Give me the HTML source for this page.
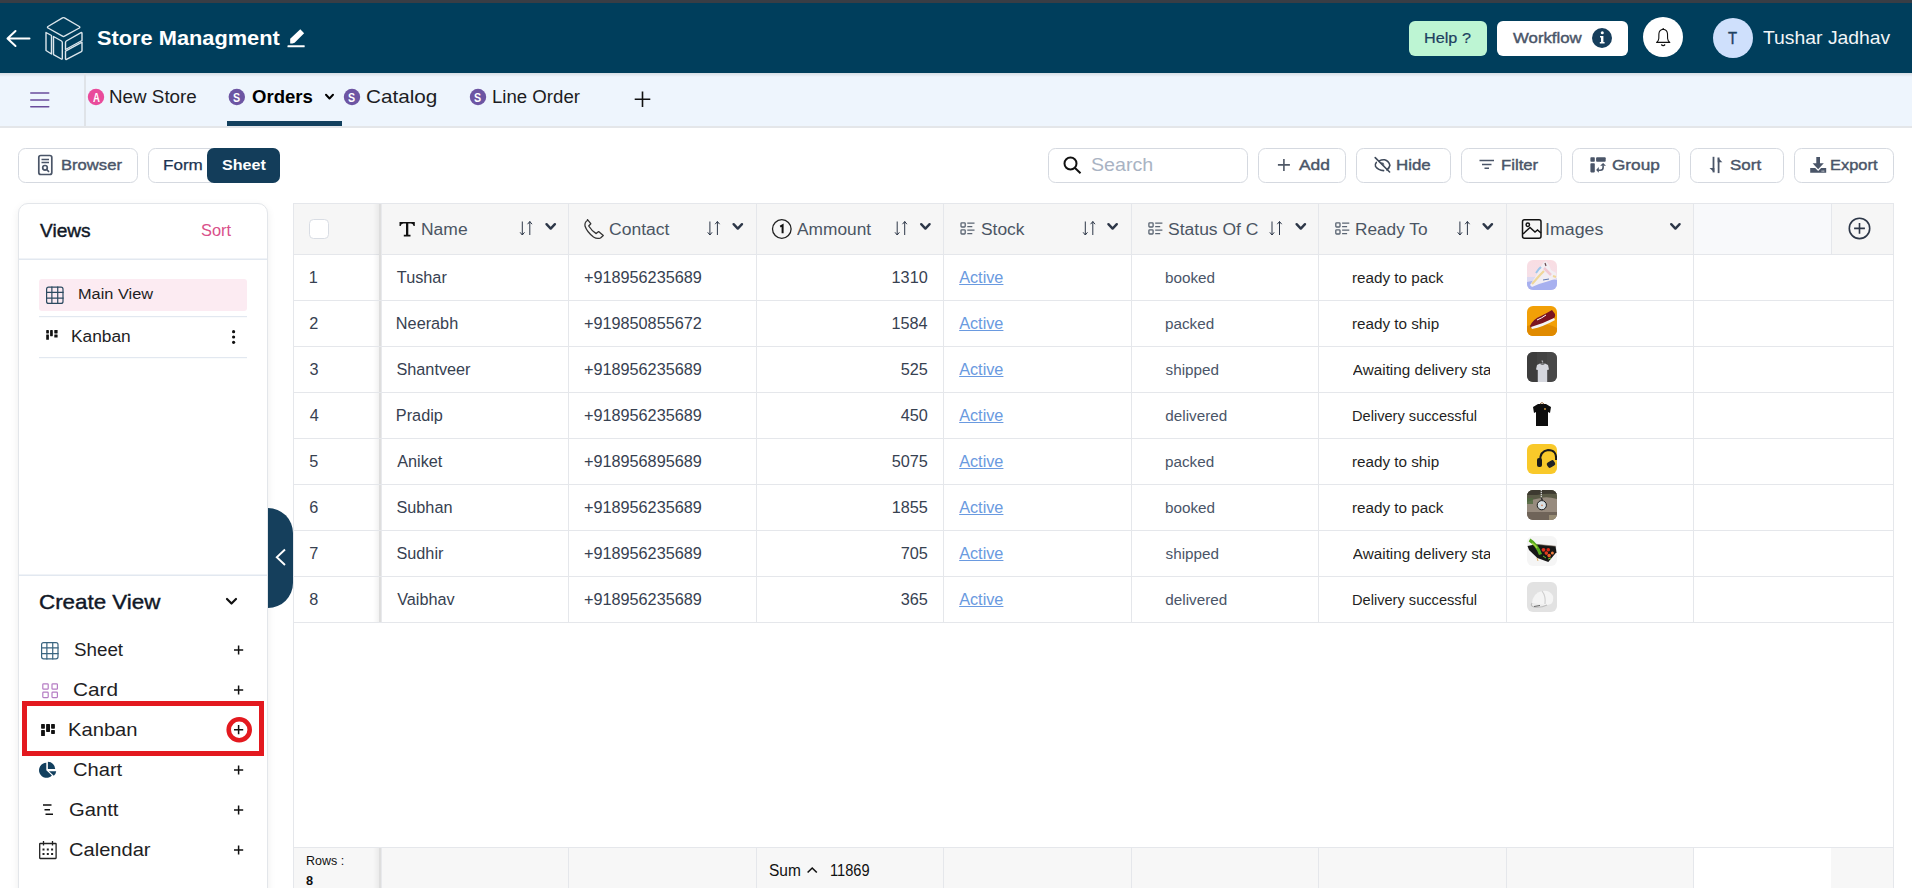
<!DOCTYPE html><html><head><meta charset="utf-8"><style>
html,body{margin:0;padding:0;width:1912px;height:888px;overflow:hidden;background:#fff;}
body{position:relative;font-family:"Liberation Sans",sans-serif;}
.t{position:absolute;white-space:nowrap;line-height:1;transform-origin:0 0;}
svg.ov{position:absolute;left:0;top:0;}
.d{position:absolute;}
</style></head><body>
<div class="d" style="left:18px;top:203px;width:248px;height:700px;border:1px solid #e3e6ea;border-radius:10px;box-shadow:0 3px 8px rgba(0,0,0,0.07);background:#fff;"></div>
<svg class="ov" width="1912" height="888" viewBox="0 0 1912 888">
<rect x="0" y="0" width="1912" height="3" fill="#383d45" />
<rect x="0" y="3" width="1912" height="70" fill="#003e5c" />
<path d="M29.5 38.5 H8 M15.5 31 L7.5 38.5 L15.5 46" fill="none" stroke="#fff" stroke-width="2" stroke-linecap="round" stroke-linejoin="round"/>
<g fill="none" stroke="#dce6ec" stroke-width="1.4" stroke-linejoin="round">
<path d="M48 26.5 Q47 27.2 48 28 L62.5 36.2 Q63.5 36.8 64.5 36.2 L79.3 28 Q80.3 27.2 79.3 26.5 L64.5 17.9 Q63.5 17.3 62.5 17.9 Z"/>
<path d="M46 32.5 L51.5 35.5 L51.5 54 L46 50.5 Z"/>
<path d="M53.5 36.5 L61.5 41 Q62.3 41.5 62.3 42.5 L62.3 58.5 Q62.3 59.5 61.3 59 L53.5 54.6 Z"/>
<path d="M65.5 42.5 Q65.5 41.5 66.3 41 L81 32.7 Q82 32.2 82 33.2 L82 40.5 L65.5 49.5 Z"/>
<path d="M65.5 51.2 L82 42.2 L82 50.5 Q82 51.2 81.3 51.6 L66.5 59.3 Q65.5 59.8 65.5 58.8 Z"/>
</g>
<path d="M290.2 38.8 L300.3 29.3 L304.1 33.3 L294.6 42.7 Q292.5 43.6 290.2 43.6 Z" fill="#fff"/><path d="M287.8 45.2 H304.5 Q305 46.2 304.5 47.2 H287.6 Q287.1 46.2 287.8 45.2 Z" fill="#fff"/>
<rect x="1409" y="21" width="78" height="35" rx="6" fill="#bdf5d3"/>
<rect x="1497" y="21" width="131" height="35" rx="6" fill="#fff"/>
<circle cx="1602" cy="38" r="10" fill="#163e5c"/>
<circle cx="1602.3" cy="32.8" r="1.5" fill="#fff"/><path d="M1600 36 H1603.4 V42 H1604.6 V43.6 H1599.8 V42 H1601 V37.5 H1600 Z" fill="#fff"/>
<circle cx="1663" cy="37" r="20" fill="#fff"/>
<path d="M1656.6 42.4 Q1658.6 41 1658.8 38.5 L1658.9 33.8 Q1659.2 29.6 1663.2 29.2 Q1667.2 29.6 1667.5 33.8 L1667.6 38.5 Q1667.8 41 1669.8 42.4 Z" fill="none" stroke="#111" stroke-width="1.1" stroke-linejoin="round"/><path d="M1661.3 44.5 Q1663.2 46.6 1665.1 44.5" fill="none" stroke="#111" stroke-width="1.2"/><path d="M1663.2 28 V29.4" stroke="#111" stroke-width="1.1"/>
<circle cx="1733" cy="38" r="20" fill="#cfe0fc"/>
<rect x="0" y="73" width="1912" height="53" fill="#eef5fd" />
<defs><linearGradient id="hs" x1="0" y1="0" x2="0" y2="1"><stop offset="0" stop-color="#000" stop-opacity="0.10"/><stop offset="1" stop-color="#000" stop-opacity="0"/></linearGradient></defs>
<rect x="0" y="73" width="1912" height="4" fill="url(#hs)" />
<rect x="0" y="126" width="1912" height="2" fill="#e4e6e9" />
<rect x="30" y="92.2" width="19.5" height="1.6" fill="#6a4c9c" rx="0.8"/>
<rect x="30" y="99.2" width="19.5" height="1.6" fill="#6a4c9c" rx="0.8"/>
<rect x="30" y="106.0" width="19.5" height="1.6" fill="#6a4c9c" rx="0.8"/>
<rect x="84" y="73" width="2" height="53" fill="#dfe3e8" />
<circle cx="96" cy="97" r="8.2" fill="#e94b9b"/>
<circle cx="236.8" cy="97" r="8.2" fill="#6d55a3"/>
<path d="M326 94.8 L329.5 98.5 L333 94.8" fill="none" stroke="#000" stroke-width="2" stroke-linecap="round" stroke-linejoin="round"/>
<circle cx="352" cy="97" r="8.2" fill="#6d55a3"/>
<circle cx="478" cy="97" r="8.2" fill="#6d55a3"/>
<path d="M642.5 91.5 V107 M634.7 99.2 H650.3" fill="none" stroke="#111" stroke-width="1.6"/>
<rect x="227" y="121" width="115" height="5" fill="#12405e" />
<rect x="18.5" y="148.5" width="119" height="34" rx="7" fill="#fff" stroke="#d5d9e0" stroke-width="1"/>
<g fill="none" stroke="#4a5568" stroke-width="1.7"><rect x="38.8" y="155.5" width="13" height="19" rx="2"/><path d="M41.5 159.5 H49 M41.5 162.5 H49"/><circle cx="45" cy="167.8" r="2.3"/><path d="M46.7 169.5 L49 171.8"/></g>
<rect x="148.5" y="148.5" width="131" height="34" rx="7" fill="#fff" stroke="#d5d9e0"/>
<rect x="207" y="148" width="73" height="35" rx="7" fill="#133d5a"/>
<rect x="1048.5" y="148.5" width="199" height="34" rx="7" fill="#fff" stroke="#d5d9e0" stroke-width="1"/>
<g fill="none" stroke="#111" stroke-width="2"><circle cx="1070.5" cy="163.5" r="6"/><path d="M1075 168 L1080.5 173.3"/></g>
<rect x="1258.5" y="148.5" width="87" height="34" rx="7" fill="#fff" stroke="#d5d9e0" stroke-width="1"/>
<path d="M1283.9 159 V171 M1277.9 164.9 H1289.9" stroke="#4f5866" stroke-width="1.6"/>
<rect x="1356.5" y="148.5" width="94" height="34" rx="7" fill="#fff" stroke="#d5d9e0" stroke-width="1"/>
<g fill="none" stroke="#3f4a5a" stroke-width="1.6" stroke-linecap="round"><path d="M1375.2 157.6 L1389.6 172"/><path d="M1379.2 160.9 Q1381.8 159.5 1384.6 159.8 Q1388.6 160.8 1389.9 165.2 Q1389.2 168.3 1386.8 169.9"/><path d="M1376.3 162.4 Q1374.6 164.4 1375.5 166.4 Q1378.2 170.4 1383.6 170.6"/></g><path d="M1380.2 162.3 L1383.4 162.8 L1384.6 165.6 Z" fill="#3f4a5a"/>
<rect x="1461.5" y="148.5" width="100" height="34" rx="7" fill="#fff" stroke="#d5d9e0" stroke-width="1"/>
<path d="M1479.5 160.5 H1494 M1482 164.5 H1491.5 M1484.5 168.3 H1489" stroke="#4a5568" stroke-width="1.6"/>
<rect x="1572.5" y="148.5" width="107" height="34" rx="7" fill="#fff" stroke="#d5d9e0" stroke-width="1"/>
<g fill="#4a5568"><rect x="1590.4" y="157.3" width="4.4" height="4.4" rx="0.8"/><rect x="1590.4" y="163.2" width="4.4" height="9.2" rx="0.8"/><rect x="1596.1" y="157.3" width="9.6" height="4.4" rx="0.9"/><path d="M1603.1 163 L1606 165.8 L1600.1 165.8 Z"/><path d="M1596.1 169.9 L1598.8 167 L1598.8 172.8 Z"/></g><path d="M1603.1 165.5 V167.5 Q1603.1 170.2 1600.3 170.2 H1598.3" fill="none" stroke="#4a5568" stroke-width="1.6"/>
<rect x="1690.5" y="148.5" width="93" height="34" rx="7" fill="#fff" stroke="#d5d9e0" stroke-width="1"/>
<g fill="#4a5568"><rect x="1712.6" y="156.8" width="1.8" height="15.6"/><path d="M1709.5 168 L1714.4 168 L1714.4 172.6 Z"/><rect x="1717.7" y="157.5" width="1.8" height="15.6"/><path d="M1717.7 157.4 L1722.4 162.2 L1717.7 162.2 Z"/></g>
<rect x="1794.5" y="148.5" width="99" height="34" rx="7" fill="#fff" stroke="#d5d9e0" stroke-width="1"/>
<g fill="#4a5568"><rect x="1816.3" y="157" width="3.7" height="7"/><path d="M1812.6 163.3 H1823.8 L1818.15 169.2 Z"/><path d="M1810.2 168 H1815.2 L1818.15 171 L1821.1 168 H1826.2 V172.8 H1810.2 Z"/></g><rect x="1821.6" y="170.6" width="1" height="1" fill="#fff"/><rect x="1823.3" y="170.6" width="1" height="1" fill="#fff"/>
<rect x="19" y="258.5" width="248" height="1.5" fill="#e2e8f0" />
<rect x="39" y="279" width="208" height="32" rx="3" fill="#fcebf2"/>
<g fill="none" stroke="#2c4a60" stroke-width="1.2"><rect x="46.6" y="287.20000000000005" width="16.400000000000002" height="16.2" rx="2"/><path d="M51.87 286.6 V304.0 M57.73 286.6 V304.0 M46 292.40 H63.6 M46 298.20 H63.6"/></g>
<rect x="39" y="316" width="208" height="1.2" fill="#e2e8f0" />
<g fill="#111"><rect x="46.2" y="330" width="2.7" height="3.4" rx="0.4"/><rect x="46.2" y="334.4" width="2.7" height="5.4" rx="0.4"/><rect x="50.1" y="330" width="2.7" height="6.2" rx="0.4"/><rect x="54.3" y="330" width="3.3" height="3.4" rx="0.4"/><rect x="54.3" y="334.4" width="3.3" height="3.2" rx="0.4"/></g>
<g fill="#111"><circle cx="233.6" cy="331.7" r="1.6"/><circle cx="233.6" cy="337" r="1.6"/><circle cx="233.6" cy="342.3" r="1.6"/></g>
<rect x="39" y="357" width="208" height="1.2" fill="#e2e8f0" />
<rect x="19" y="574.5" width="248" height="1.5" fill="#e2e8f0" />
<path d="M227 599 L231.5 603.5 L236 599" fill="none" stroke="#111" stroke-width="2.2" stroke-linecap="round" stroke-linejoin="round"/>
<g fill="none" stroke="#3a6580" stroke-width="1.2"><rect x="41.6" y="642.6" width="16.400000000000002" height="16.2" rx="2"/><path d="M46.87 642 V659.4 M52.73 642 V659.4 M41 647.80 H58.6 M41 653.60 H58.6"/></g>
<path d="M238.6 645.4 V654.6 M234.0 650 H243.2" stroke="#111" stroke-width="1.5"/>
<g fill="none" stroke="#b57cc4" stroke-width="1.2"><rect x="42.8" y="683.8" width="5.4" height="5.4" rx="0.8"/><rect x="52" y="683.8" width="5.4" height="5.4" rx="0.8"/><rect x="42.8" y="692.2" width="5.4" height="5.4" rx="0.8"/><rect x="52" y="692.2" width="5.4" height="5.4" rx="0.8"/></g>
<path d="M238.6 685.4 V694.6 M234.0 690 H243.2" stroke="#111" stroke-width="1.5"/>
<g fill="#111"><rect x="41.1" y="724.1" width="3.8" height="4.6" rx="0.6"/><rect x="41.1" y="729.9" width="3.8" height="6.1" rx="0.6"/><rect x="46.1" y="724.1" width="3.9" height="7.8" rx="0.6"/><rect x="51.1" y="724.1" width="3.8" height="4.6" rx="0.6"/><rect x="51.1" y="729.9" width="3.8" height="4" rx="0.6"/></g>
<path d="M238.6 725.1 V734.3000000000001 M234.0 729.7 H243.2" stroke="#111" stroke-width="1.5"/>
<rect x="24.5" y="703.5" width="237" height="50" fill="none" stroke="#e3191f" stroke-width="5"/>
<circle cx="239.2" cy="729.7" r="10.5" fill="none" stroke="#e3191f" stroke-width="4.6"/>
<g fill="#123f5e"><path d="M46.3 762.8 A7.5 7.5 0 1 0 51.9 775.5 L46.3 770.3 Z"/><path d="M47.9 761.8 A7.3 7.3 0 0 1 55.2 769.0 L47.9 769.0 Z"/><path d="M49 771.2 L56.2 771.2 A7.3 7.3 0 0 1 53.8 775.8 Z"/></g>
<path d="M238.6 765.4 V774.6 M234.0 770 H243.2" stroke="#111" stroke-width="1.5"/>
<path d="M43 805 H51.5 M44.5 809.7 H50 M45.5 814.2 H53" stroke="#111" stroke-width="1.6"/>
<path d="M238.6 805.4 V814.6 M234.0 810 H243.2" stroke="#111" stroke-width="1.5"/>
<g fill="none" stroke="#222" stroke-width="1.3"><rect x="39.7" y="843.5" width="16.4" height="15" rx="0.5"/><path d="M43.5 841 V845.5 M52.5 841 V845.5"/></g><g fill="#222"><rect x="42.5" y="848.5" width="2" height="2"/><rect x="46.8" y="848.5" width="2" height="2"/><rect x="51.1" y="848.5" width="2" height="2"/><rect x="42.5" y="853" width="2" height="2"/><rect x="46.8" y="853" width="2" height="2"/><rect x="51.1" y="853" width="2" height="2"/></g>
<path d="M238.6 845.4 V854.6 M234.0 850 H243.2" stroke="#111" stroke-width="1.5"/>
<rect x="293" y="203" width="1601" height="1" fill="#e5e7eb" />
<rect x="293" y="203" width="1" height="685" fill="#e5e7eb" />
<rect x="1893" y="203" width="1" height="685" fill="#e5e7eb" />
<rect x="294" y="204" width="1599" height="50" fill="#f6f6f6" />
<rect x="1694" y="204" width="137" height="50" fill="#f8f9fb" />
<rect x="294" y="254" width="1599" height="1" fill="#e5e7eb" />
<rect x="568" y="204" width="1" height="418" fill="#e5e7eb" />
<rect x="756" y="204" width="1" height="418" fill="#e5e7eb" />
<rect x="943" y="204" width="1" height="418" fill="#e5e7eb" />
<rect x="1131" y="204" width="1" height="418" fill="#e5e7eb" />
<rect x="1318" y="204" width="1" height="418" fill="#e5e7eb" />
<rect x="1506" y="204" width="1" height="418" fill="#e5e7eb" />
<rect x="1693" y="204" width="1" height="418" fill="#e5e7eb" />
<rect x="1831" y="204" width="1" height="50" fill="#e5e7eb" />
<defs><linearGradient id="dv" x1="0" y1="0" x2="1" y2="0"><stop offset="0" stop-color="#000" stop-opacity="0"/><stop offset="1" stop-color="#000" stop-opacity="0.05"/></linearGradient></defs>
<rect x="373" y="204" width="6" height="418" fill="url(#dv)" />
<rect x="379" y="204" width="2" height="418" fill="#dedede" />
<rect x="381" y="204" width="1" height="418" fill="#e8e9ec" />
<rect x="294" y="300" width="1599" height="1" fill="#e5e7eb" />
<rect x="294" y="346" width="1599" height="1" fill="#e5e7eb" />
<rect x="294" y="392" width="1599" height="1" fill="#e5e7eb" />
<rect x="294" y="438" width="1599" height="1" fill="#e5e7eb" />
<rect x="294" y="484" width="1599" height="1" fill="#e5e7eb" />
<rect x="294" y="530" width="1599" height="1" fill="#e5e7eb" />
<rect x="294" y="576" width="1599" height="1" fill="#e5e7eb" />
<rect x="294" y="622" width="1599" height="1" fill="#e5e7eb" />
<rect x="294" y="847" width="1599" height="1" fill="#e5e7eb" />
<rect x="294" y="848" width="1599" height="40" fill="#f7f7f7" />
<rect x="1694" y="848" width="137" height="40" fill="#ffffff" />
<rect x="568" y="848" width="1" height="40" fill="#e5e7eb" />
<rect x="756" y="848" width="1" height="40" fill="#e5e7eb" />
<rect x="943" y="848" width="1" height="40" fill="#e5e7eb" />
<rect x="1131" y="848" width="1" height="40" fill="#e5e7eb" />
<rect x="1318" y="848" width="1" height="40" fill="#e5e7eb" />
<rect x="1506" y="848" width="1" height="40" fill="#e5e7eb" />
<rect x="1693" y="848" width="1" height="40" fill="#e5e7eb" />
<rect x="373" y="848" width="6" height="40" fill="url(#dv)" />
<rect x="379" y="848" width="2" height="40" fill="#dedede" />
<rect x="381" y="848" width="1" height="40" fill="#e8e9ec" />
<rect x="309.5" y="219.5" width="19" height="19" rx="4" fill="#fff" stroke="#d9dde4"/>
<path d="M399.5 222 H414.8 V226 H413.6 Q413.3 223.5 411 223.5 H408.3 V234.8 H410.5 V236.4 H403.8 V234.8 H406 V223.5 H403.3 Q401 223.5 400.7 226 H399.5 Z" fill="#111"/>
<g fill="none" stroke="#2d3748" stroke-width="1"><path d="M522.3 221.5 V235 M520.0999999999999 232.3 L522.3 235 L524.5 232.3"/><path d="M529.8 235 V221.5 M527.5999999999999 224.2 L529.8 221.5 L532.0 224.2"/></g>
<path d="M546.5 224.2 L550.7 228.6 L554.9 224.2" fill="none" stroke="#2d3748" stroke-width="2.4" stroke-linecap="round" stroke-linejoin="round"/>
<path d="M587.5 220.5 Q584.5 222 585 226 Q587 232 593.5 237 Q597 239.3 600.5 238 L603.3 235.6 L598.6 231.6 L596.2 233.6 Q591.5 230.5 588.7 226 L590.8 223.7 L587.5 219.6 Z" fill="none" stroke="#333" stroke-width="1.3" stroke-linejoin="round"/>
<g fill="none" stroke="#2d3748" stroke-width="1"><path d="M709.9 221.5 V235 M707.6999999999999 232.3 L709.9 235 L712.1 232.3"/><path d="M717.4 235 V221.5 M715.1999999999999 224.2 L717.4 221.5 L719.6 224.2"/></g>
<path d="M733.6 224.2 L737.8000000000001 228.6 L742.0 224.2" fill="none" stroke="#2d3748" stroke-width="2.4" stroke-linecap="round" stroke-linejoin="round"/>
<circle cx="781.8" cy="229" r="9.3" fill="none" stroke="#222" stroke-width="1.3"/><path d="M780.2 226.6 L782.6 225.2 V233.2" fill="none" stroke="#111" stroke-width="2"/>
<g fill="none" stroke="#2d3748" stroke-width="1"><path d="M897.2 221.5 V235 M895.0 232.3 L897.2 235 L899.4000000000001 232.3"/><path d="M904.7 235 V221.5 M902.5 224.2 L904.7 221.5 L906.9000000000001 224.2"/></g>
<path d="M921.2 224.2 L925.4000000000001 228.6 L929.6 224.2" fill="none" stroke="#2d3748" stroke-width="2.4" stroke-linecap="round" stroke-linejoin="round"/>
<g fill="none" stroke="#5a6472" stroke-width="1.3"><rect x="961.0" y="222.8" width="4.2" height="4.2" rx="0.8"/><rect x="961.0" y="229.8" width="4.2" height="4.2" rx="0.8"/><path d="M967.3 223.2 H974.5 M967.3 226.6 H972.3 M967.3 230.2 H974.5 M967.3 233.6 H972.3"/></g>
<g fill="none" stroke="#2d3748" stroke-width="1"><path d="M1085.3 221.5 V235 M1083.1 232.3 L1085.3 235 L1087.5 232.3"/><path d="M1092.8 235 V221.5 M1090.6 224.2 L1092.8 221.5 L1095.0 224.2"/></g>
<path d="M1108.4 224.2 L1112.6000000000001 228.6 L1116.8000000000002 224.2" fill="none" stroke="#2d3748" stroke-width="2.4" stroke-linecap="round" stroke-linejoin="round"/>
<g fill="none" stroke="#5a6472" stroke-width="1.3"><rect x="1148.9" y="222.8" width="4.2" height="4.2" rx="0.8"/><rect x="1148.9" y="229.8" width="4.2" height="4.2" rx="0.8"/><path d="M1155.2 223.2 H1162.4 M1155.2 226.6 H1160.2 M1155.2 230.2 H1162.4 M1155.2 233.6 H1160.2"/></g>
<g fill="none" stroke="#2d3748" stroke-width="1"><path d="M1272.0 221.5 V235 M1269.8 232.3 L1272.0 235 L1274.2 232.3"/><path d="M1279.5 235 V221.5 M1277.3 224.2 L1279.5 221.5 L1281.7 224.2"/></g>
<path d="M1296.6 224.2 L1300.8 228.6 L1305.0 224.2" fill="none" stroke="#2d3748" stroke-width="2.4" stroke-linecap="round" stroke-linejoin="round"/>
<g fill="none" stroke="#5a6472" stroke-width="1.3"><rect x="1335.8" y="222.8" width="4.2" height="4.2" rx="0.8"/><rect x="1335.8" y="229.8" width="4.2" height="4.2" rx="0.8"/><path d="M1342.1 223.2 H1349.3 M1342.1 226.6 H1347.1 M1342.1 230.2 H1349.3 M1342.1 233.6 H1347.1"/></g>
<g fill="none" stroke="#2d3748" stroke-width="1"><path d="M1459.9 221.5 V235 M1457.7 232.3 L1459.9 235 L1462.1000000000001 232.3"/><path d="M1467.4 235 V221.5 M1465.2 224.2 L1467.4 221.5 L1469.6000000000001 224.2"/></g>
<path d="M1483.6 224.2 L1487.8 228.6 L1492.0 224.2" fill="none" stroke="#2d3748" stroke-width="2.4" stroke-linecap="round" stroke-linejoin="round"/>
<g fill="none" stroke="#111" stroke-width="1.5"><rect x="1522.5" y="219.8" width="18.5" height="18.5" rx="2"/><circle cx="1527.8" cy="224.8" r="1.7"/><path d="M1523 234 L1530 227.5 L1535 232 L1537.5 230 L1541 233"/></g>
<path d="M1671.2 224.2 L1675.4 228.6 L1679.6000000000001 224.2" fill="none" stroke="#2d3748" stroke-width="2.4" stroke-linecap="round" stroke-linejoin="round"/>
<g fill="none" stroke="#2d3748" stroke-width="1.6"><circle cx="1859.5" cy="228.4" r="10.2"/><path d="M1859.5 223 V233.8 M1854.1 228.4 H1864.9"/></g>
<g transform="translate(1527,260)"><clipPath id="c0"><rect x="0" y="0" width="30" height="30" rx="6"/></clipPath><g clip-path="url(#c0)"><defs><linearGradient id="g0" x1="0" y1="0" x2="0" y2="1"><stop offset="0" stop-color="#f9dde3"/><stop offset="1" stop-color="#f3e2ea"/></linearGradient></defs><rect width="30" height="30" fill="url(#g0)"/><path d="M0 17 L30 17 L30 30 L0 30 Z" fill="#dcd9f2"/><path d="M0 22 Q15 18 30 20 L30 30 L0 30 Z" fill="#a7b0ef"/><path d="M3 25 L9 16 L12 10 L16 3 L19 1 L22 5 L24 10 L29 13 L30 18 L22 21 L12 24 L5 27 Z" fill="#f2eef4"/><path d="M5 24 L13 15 L17 11" stroke="#f0d79a" stroke-width="2.2" fill="none"/><path d="M9 13 L12 9 L14 7" stroke="#9cc6ec" stroke-width="2" fill="none"/><path d="M17 8 L21 12 L24 15" stroke="#f1c9d2" stroke-width="2.5" fill="none"/><path d="M18 3 L19 6" stroke="#6a4a50" stroke-width="1.2"/><path d="M26 16 L29 17" stroke="#f0d79a" stroke-width="2"/><path d="M16 20 L22 19" stroke="#3a5aa0" stroke-width="0.8"/></g></g>
<g transform="translate(1527,306)"><clipPath id="c1"><rect x="0" y="0" width="30" height="30" rx="6"/></clipPath><g clip-path="url(#c1)"><rect width="30" height="30" fill="#f2a007"/><path d="M0 30 L0 20 Q15 14 30 22 L30 30 Z" fill="#e08a00"/><path d="M3 20 Q6 13 14 10 Q20 7 25 4 L28 8 Q29 12 24 14 Q14 19 4 22 Z" fill="#7a1420"/><path d="M4 21 Q15 18 27 12 L28 14 Q16 21 5 23 Z" fill="#f3f3f3"/><path d="M10 14 Q15 12 19 9" stroke="#fff" stroke-width="1" fill="none"/></g></g>
<g transform="translate(1527,352)"><clipPath id="c2"><rect x="0" y="0" width="30" height="30" rx="6"/></clipPath><g clip-path="url(#c2)"><rect width="30" height="30" fill="#434343"/><rect x="0" y="0" width="10" height="30" fill="#3a3a3a" opacity="0.7"/><rect x="20" y="0" width="10" height="30" fill="#4c4c4c" opacity="0.6"/><path d="M14.5 9 Q16 8 15.7 10.5" stroke="#cfd1d6" stroke-width="0.8" fill="none"/><path d="M10 13 L13 11.5 L18 11.5 L21 13 L22 17.5 L20.2 18 L20.2 31 L10.8 31 L10.8 18 L9 17.5 Z" fill="#d5d7de"/><path d="M13.5 11.8 Q15.5 13 17.5 11.8" stroke="#2a2a2a" stroke-width="0.8" fill="none"/></g></g>
<g transform="translate(1527,398)"><clipPath id="c3"><rect x="0" y="0" width="30" height="30" rx="6"/></clipPath><g clip-path="url(#c3)"><rect width="30" height="30" fill="#ffffff"/><path d="M6 9 L11 6 L19 6 L24 9 L23 15 L21 14 L21 28 L9 28 L9 14 L7 15 Z" fill="#0d0d0d"/><path d="M13 6 Q15 3 17 6" stroke="#8a5a2a" stroke-width="0.9" fill="none"/><circle cx="18" cy="11" r="0.9" fill="#d8a040"/></g></g>
<g transform="translate(1527,444)"><clipPath id="c4"><rect x="0" y="0" width="30" height="30" rx="6"/></clipPath><g clip-path="url(#c4)"><rect width="30" height="30" fill="#f9c92a"/><path d="M13 20 Q12 7 21 6 Q30 6 29 16" stroke="#1a1a1a" stroke-width="2" fill="none"/><rect x="10" y="14" width="5" height="9" rx="2" fill="#1a1a1a"/><rect x="20" y="17" width="8" height="6" rx="2" fill="#222" transform="rotate(-30 24 20)"/></g></g>
<g transform="translate(1527,490)"><clipPath id="c5"><rect x="0" y="0" width="30" height="30" rx="6"/></clipPath><g clip-path="url(#c5)"><rect width="30" height="30" fill="#978b7e"/><path d="M0 0 H30 V9 Q20 6 14 8 Q6 9 0 12 Z" fill="#5a5a46"/><path d="M0 0 H30 V4 Q18 3 10 5 L0 5 Z" fill="#3d3a30"/><rect x="0" y="8" width="6" height="6" fill="#506a40" opacity="0.8"/><rect x="0" y="22" width="30" height="8" fill="#6f6459"/><rect x="22" y="25" width="8" height="5" fill="#a89c80" opacity="0.7"/><path d="M14.3 0 V9" stroke="#d8d8d8" stroke-width="1.3" stroke-dasharray="1.2 0.8"/><path d="M14 8 L15.5 10" stroke="#333" stroke-width="1.5"/><circle cx="14.8" cy="15.2" r="4.6" fill="#d9e2e6" stroke="#1a1a1a" stroke-width="1"/><circle cx="15" cy="15.4" r="0.8" fill="#d07a50"/></g></g>
<g transform="translate(1527,536)"><clipPath id="c6"><rect x="0" y="0" width="30" height="30" rx="6"/></clipPath><g clip-path="url(#c6)"><rect width="30" height="30" fill="#f5f5f5"/><path d="M0.5 10 L9 8.3 L28.6 10.2 L29.4 16.3 L21.3 26 L10.4 22 L2 14 Z" fill="#161616"/><path d="M9 8.3 L28.6 10.2" stroke="#7a6a5a" stroke-width="0.6"/><path d="M2.5 4 Q6 6 9 10 Q12 14 13.5 18.5" stroke="#56a81e" stroke-width="3.2" fill="none"/><path d="M5 7 Q8 9 10 12" stroke="#a6d63a" stroke-width="1.5" fill="none"/><circle cx="16.5" cy="13.8" r="1.9" fill="#e6301c"/><circle cx="21.3" cy="13.8" r="1.8" fill="#d92818"/><circle cx="19.3" cy="17.1" r="1.8" fill="#e23a1e"/><circle cx="22.1" cy="19.6" r="1.8" fill="#ef5a26"/><circle cx="25.4" cy="17.1" r="1.5" fill="#f08040"/><path d="M16 20 L19 22 M21 23 L24 22" stroke="#6ac02a" stroke-width="1"/><path d="M10 22 L11 25" stroke="#e0a040" stroke-width="0.8"/></g></g>
<g transform="translate(1527,582)"><clipPath id="c7"><rect x="0" y="0" width="30" height="30" rx="6"/></clipPath><g clip-path="url(#c7)"><rect width="30" height="30" fill="#e2e2e2"/><path d="M5 21 Q6 11 15 9 Q23 8 26 14 Q27 19 24 22 Q15 25 5 21 Z" fill="#f4f4f4"/><path d="M15 9 Q19 14 18 22" stroke="#cfcfcf" stroke-width="1.2" fill="none"/><path d="M5 21 Q3 24 7 25 Q14 26 20 23" stroke="#bdbdbd" stroke-width="1.2" fill="#ececec"/><path d="M7 24.5 L13 23.5" stroke="#555" stroke-width="0.9"/></g></g>
<path d="M807.6 872.5 L812.2 868 L816.8 872.5" fill="none" stroke="#111" stroke-width="1.6"/>
<path d="M268 508 H268 A25 25 0 0 1 293 533 V583 A25 25 0 0 1 268 608 Z" fill="#153f5c"/>
<path d="M285 549.5 L276.8 557.3 L285 565" fill="none" stroke="#fff" stroke-width="1.9"/>
</svg>
<span class="t" style="left:96.97px;top:27px;font-size:21.0px;font-weight:700;color:#ffffff;transform:scaleX(1.0375);">Store Managment</span>
<span class="t" style="left:1423.67px;top:31px;font-size:14.75px;font-weight:400;color:#1d4060;transform:scaleX(1.1008);-webkit-text-stroke:0.2px #1d4060;">Help ?</span>
<span class="t" style="left:1512.93px;top:31px;font-size:14.75px;font-weight:400;color:#4a5568;transform:scaleX(1.1384);-webkit-text-stroke:0.4px #4a5568;">Workflow</span>
<span class="t" style="left:1728.47px;top:30px;font-size:17.25px;font-weight:400;color:#1d4060;transform:scaleX(0.8612);-webkit-text-stroke:0.4px #1d4060;">T</span>
<span class="t" style="left:1763.07px;top:29px;font-size:18.5px;font-weight:400;color:#f2f5f7;transform:scaleX(1.0460);">Tushar Jadhav</span>
<span class="t" style="left:92.56px;top:91px;font-size:13.25px;font-weight:700;color:#fff;transform:scaleX(0.7200);">A</span>
<span class="t" style="left:109.46px;top:88px;font-size:18.25px;font-weight:400;color:#1c1c22;transform:scaleX(1.0303);">New Store</span>
<span class="t" style="left:233.29px;top:91px;font-size:13.25px;font-weight:700;color:#fff;transform:scaleX(0.8062);">S</span>
<span class="t" style="left:251.84px;top:88px;font-size:18.25px;font-weight:700;color:#000000;transform:scaleX(1.0180);">Orders</span>
<span class="t" style="left:348.49px;top:91px;font-size:13.25px;font-weight:700;color:#fff;transform:scaleX(0.8062);">S</span>
<span class="t" style="left:366.35px;top:88px;font-size:18.25px;font-weight:400;color:#1c1c22;transform:scaleX(1.1349);">Catalog</span>
<span class="t" style="left:474.49px;top:91px;font-size:13.25px;font-weight:700;color:#fff;transform:scaleX(0.8062);">S</span>
<span class="t" style="left:491.67px;top:88px;font-size:18.25px;font-weight:400;color:#1c1c22;transform:scaleX(1.0199);">Line Order</span>
<span class="t" style="left:60.64px;top:157px;font-size:15.0px;font-weight:400;color:#4a5568;transform:scaleX(1.1077);-webkit-text-stroke:0.4px #4a5568;">Browser</span>
<span class="t" style="left:163.10px;top:157px;font-size:15.25px;font-weight:400;color:#1c3452;transform:scaleX(1.1194);-webkit-text-stroke:0.25px #1c3452;">Form</span>
<span class="t" style="left:221.84px;top:157px;font-size:15.25px;font-weight:700;color:#ffffff;transform:scaleX(1.0562);">Sheet</span>
<span class="t" style="left:1091.11px;top:156px;font-size:18.25px;font-weight:400;color:#a9b3c3;transform:scaleX(1.0751);">Search</span>
<span class="t" style="left:1299.37px;top:157px;font-size:15.0px;font-weight:400;color:#4a5568;transform:scaleX(1.1598);-webkit-text-stroke:0.4px #4a5568;">Add</span>
<span class="t" style="left:1396.31px;top:157px;font-size:15.0px;font-weight:400;color:#4a5568;transform:scaleX(1.1260);-webkit-text-stroke:0.4px #4a5568;">Hide</span>
<span class="t" style="left:1500.93px;top:157px;font-size:15.0px;font-weight:400;color:#4a5568;transform:scaleX(1.1145);-webkit-text-stroke:0.4px #4a5568;">Filter</span>
<span class="t" style="left:1612.24px;top:157px;font-size:15.0px;font-weight:400;color:#4a5568;transform:scaleX(1.1463);-webkit-text-stroke:0.4px #4a5568;">Group</span>
<span class="t" style="left:1729.73px;top:157px;font-size:15.0px;font-weight:400;color:#4a5568;transform:scaleX(1.1303);-webkit-text-stroke:0.4px #4a5568;">Sort</span>
<span class="t" style="left:1830.35px;top:157px;font-size:15.0px;font-weight:400;color:#4a5568;transform:scaleX(1.0949);-webkit-text-stroke:0.4px #4a5568;">Export</span>
<span class="t" style="left:39.52px;top:223px;font-size:17.5px;font-weight:400;color:#111827;transform:scaleX(1.0920);-webkit-text-stroke:0.4px #111827;">Views</span>
<span class="t" style="left:200.76px;top:223px;font-size:15.75px;font-weight:400;color:#d9508a;transform:scaleX(1.0408);">Sort</span>
<span class="t" style="left:78.06px;top:287px;font-size:14.75px;font-weight:400;color:#1e1e24;transform:scaleX(1.1067);">Main View</span>
<span class="t" style="left:70.58px;top:329px;font-size:16.0px;font-weight:400;color:#1e1e24;transform:scaleX(1.0831);">Kanban</span>
<span class="t" style="left:38.56px;top:592px;font-size:20.25px;font-weight:400;color:#111827;transform:scaleX(1.1041);-webkit-text-stroke:0.4px #111827;">Create View</span>
<span class="t" style="left:73.65px;top:641px;font-size:18.25px;font-weight:400;color:#1e1e24;transform:scaleX(1.0293);">Sheet</span>
<span class="t" style="left:73.44px;top:681px;font-size:18.25px;font-weight:400;color:#1e1e24;transform:scaleX(1.1401);">Card</span>
<span class="t" style="left:67.74px;top:722px;font-size:17.75px;font-weight:400;color:#1e1e24;transform:scaleX(1.1367);">Kanban</span>
<span class="t" style="left:73.48px;top:761px;font-size:18.0px;font-weight:400;color:#1e1e24;transform:scaleX(1.1171);">Chart</span>
<span class="t" style="left:68.68px;top:801px;font-size:18.0px;font-weight:400;color:#1e1e24;transform:scaleX(1.1213);">Gantt</span>
<span class="t" style="left:68.68px;top:840px;font-size:19.25px;font-weight:400;color:#1e1e24;transform:scaleX(1.0440);">Calendar</span>
<span class="t" style="left:420.87px;top:221px;font-size:17.25px;font-weight:400;color:#4b5563;transform:scaleX(1.0129);">Name</span>
<span class="t" style="left:608.91px;top:221px;font-size:17.25px;font-weight:400;color:#4b5563;transform:scaleX(1.0163);">Contact</span>
<span class="t" style="left:796.77px;top:221px;font-size:17.25px;font-weight:400;color:#4b5563;transform:scaleX(1.0033);">Ammount</span>
<span class="t" style="left:980.61px;top:221px;font-size:17.25px;font-weight:400;color:#4b5563;transform:scaleX(1.0075);">Stock</span>
<span class="t" style="left:1168.21px;top:221px;font-size:17.25px;font-weight:400;color:#4b5563;transform:scaleX(1.0146);">Status Of C</span>
<span class="t" style="left:1354.98px;top:221px;font-size:17.25px;font-weight:400;color:#4b5563;">Ready To</span>
<span class="t" style="left:1545.16px;top:221px;font-size:17.25px;font-weight:400;color:#4b5563;transform:scaleX(1.0321);">Images</span>
<span class="t" style="left:308.76px;top:269px;font-size:16.25px;font-weight:400;color:#374151;">1</span>
<span class="t" style="left:396.84px;top:269px;font-size:16.25px;font-weight:400;color:#374151;">Tushar</span>
<span class="t" style="left:583.91px;top:269px;font-size:16.25px;font-weight:400;color:#374151;">+918956235689</span>
<span class="t" style="left:891.58px;top:269px;font-size:16.25px;font-weight:400;color:#374151;">1310</span>
<span class="t" style="left:959.17px;top:269px;font-size:16.25px;font-weight:400;color:#6a9ae0;text-decoration:underline;text-underline-offset:1px;">Active</span>
<span class="t" style="left:1165.02px;top:270px;font-size:15.25px;font-weight:400;color:#4a5568;">booked</span>
<span class="t" style="left:1351.89px;top:270px;font-size:15.25px;font-weight:400;color:#1f1f24;">ready to pack</span>
<span class="t" style="left:309.18px;top:315px;font-size:16.25px;font-weight:400;color:#374151;">2</span>
<span class="t" style="left:395.87px;top:315px;font-size:16.25px;font-weight:400;color:#374151;">Neerabh</span>
<span class="t" style="left:583.91px;top:315px;font-size:16.25px;font-weight:400;color:#374151;">+919850855672</span>
<span class="t" style="left:891.42px;top:315px;font-size:16.25px;font-weight:400;color:#374151;">1584</span>
<span class="t" style="left:959.17px;top:315px;font-size:16.25px;font-weight:400;color:#6a9ae0;text-decoration:underline;text-underline-offset:1px;">Active</span>
<span class="t" style="left:1165.02px;top:316px;font-size:15.25px;font-weight:400;color:#4a5568;">packed</span>
<span class="t" style="left:1351.89px;top:316px;font-size:15.25px;font-weight:400;color:#1f1f24;">ready to ship</span>
<span class="t" style="left:309.38px;top:361px;font-size:16.25px;font-weight:400;color:#374151;">3</span>
<span class="t" style="left:396.46px;top:361px;font-size:16.25px;font-weight:400;color:#374151;">Shantveer</span>
<span class="t" style="left:583.91px;top:361px;font-size:16.25px;font-weight:400;color:#374151;">+918956235689</span>
<span class="t" style="left:900.69px;top:361px;font-size:16.25px;font-weight:400;color:#374151;">525</span>
<span class="t" style="left:959.17px;top:361px;font-size:16.25px;font-weight:400;color:#6a9ae0;text-decoration:underline;text-underline-offset:1px;">Active</span>
<span class="t" style="left:1165.58px;top:362px;font-size:15.25px;font-weight:400;color:#4a5568;">shipped</span>
<span class="t" style="left:1352.87px;top:362px;font-size:15.25px;font-weight:400;color:#1f1f24;width:137px;overflow:hidden;padding-bottom:5px;">Awaiting delivery sta</span>
<span class="t" style="left:309.63px;top:407px;font-size:16.25px;font-weight:400;color:#374151;">4</span>
<span class="t" style="left:395.87px;top:407px;font-size:16.25px;font-weight:400;color:#374151;">Pradip</span>
<span class="t" style="left:583.91px;top:407px;font-size:16.25px;font-weight:400;color:#374151;">+918956235689</span>
<span class="t" style="left:900.64px;top:407px;font-size:16.25px;font-weight:400;color:#374151;">450</span>
<span class="t" style="left:959.17px;top:407px;font-size:16.25px;font-weight:400;color:#6a9ae0;text-decoration:underline;text-underline-offset:1px;">Active</span>
<span class="t" style="left:1165.36px;top:408px;font-size:15.25px;font-weight:400;color:#4a5568;">delivered</span>
<span class="t" style="left:1351.70px;top:408px;font-size:15.25px;font-weight:400;color:#1f1f24;transform:scaleX(0.9584);">Delivery successful</span>
<span class="t" style="left:309.35px;top:453px;font-size:16.25px;font-weight:400;color:#374151;">5</span>
<span class="t" style="left:397.17px;top:453px;font-size:16.25px;font-weight:400;color:#374151;">Aniket</span>
<span class="t" style="left:583.91px;top:453px;font-size:16.25px;font-weight:400;color:#374151;">+918956895689</span>
<span class="t" style="left:891.63px;top:453px;font-size:16.25px;font-weight:400;color:#374151;">5075</span>
<span class="t" style="left:959.17px;top:453px;font-size:16.25px;font-weight:400;color:#6a9ae0;text-decoration:underline;text-underline-offset:1px;">Active</span>
<span class="t" style="left:1165.02px;top:454px;font-size:15.25px;font-weight:400;color:#4a5568;">packed</span>
<span class="t" style="left:1351.89px;top:454px;font-size:15.25px;font-weight:400;color:#1f1f24;">ready to ship</span>
<span class="t" style="left:309.17px;top:499px;font-size:16.25px;font-weight:400;color:#374151;">6</span>
<span class="t" style="left:396.46px;top:499px;font-size:16.25px;font-weight:400;color:#374151;">Subhan</span>
<span class="t" style="left:583.91px;top:499px;font-size:16.25px;font-weight:400;color:#374151;">+918956235689</span>
<span class="t" style="left:891.63px;top:499px;font-size:16.25px;font-weight:400;color:#374151;">1855</span>
<span class="t" style="left:959.17px;top:499px;font-size:16.25px;font-weight:400;color:#6a9ae0;text-decoration:underline;text-underline-offset:1px;">Active</span>
<span class="t" style="left:1165.02px;top:500px;font-size:15.25px;font-weight:400;color:#4a5568;">booked</span>
<span class="t" style="left:1351.89px;top:500px;font-size:15.25px;font-weight:400;color:#1f1f24;">ready to pack</span>
<span class="t" style="left:309.17px;top:545px;font-size:16.25px;font-weight:400;color:#374151;">7</span>
<span class="t" style="left:396.46px;top:545px;font-size:16.25px;font-weight:400;color:#374151;">Sudhir</span>
<span class="t" style="left:583.91px;top:545px;font-size:16.25px;font-weight:400;color:#374151;">+918956235689</span>
<span class="t" style="left:900.69px;top:545px;font-size:16.25px;font-weight:400;color:#374151;">705</span>
<span class="t" style="left:959.17px;top:545px;font-size:16.25px;font-weight:400;color:#6a9ae0;text-decoration:underline;text-underline-offset:1px;">Active</span>
<span class="t" style="left:1165.58px;top:546px;font-size:15.25px;font-weight:400;color:#4a5568;">shipped</span>
<span class="t" style="left:1352.87px;top:546px;font-size:15.25px;font-weight:400;color:#1f1f24;width:137px;overflow:hidden;padding-bottom:5px;">Awaiting delivery sta</span>
<span class="t" style="left:309.29px;top:591px;font-size:16.25px;font-weight:400;color:#374151;">8</span>
<span class="t" style="left:397.13px;top:591px;font-size:16.25px;font-weight:400;color:#374151;">Vaibhav</span>
<span class="t" style="left:583.91px;top:591px;font-size:16.25px;font-weight:400;color:#374151;">+918956235689</span>
<span class="t" style="left:900.69px;top:591px;font-size:16.25px;font-weight:400;color:#374151;">365</span>
<span class="t" style="left:959.17px;top:591px;font-size:16.25px;font-weight:400;color:#6a9ae0;text-decoration:underline;text-underline-offset:1px;">Active</span>
<span class="t" style="left:1165.36px;top:592px;font-size:15.25px;font-weight:400;color:#4a5568;">delivered</span>
<span class="t" style="left:1351.70px;top:592px;font-size:15.25px;font-weight:400;color:#1f1f24;transform:scaleX(0.9584);">Delivery successful</span>
<span class="t" style="left:305.68px;top:854px;font-size:13.0px;font-weight:400;color:#111;transform:scaleX(0.9606);">Rows :</span>
<span class="t" style="left:306.29px;top:874px;font-size:13.25px;font-weight:700;color:#111;transform:scaleX(0.9632);">8</span>
<span class="t" style="left:768.50px;top:863px;font-size:16.0px;font-weight:400;color:#111;transform:scaleX(0.9673);">Sum</span>
<span class="t" style="left:830.09px;top:863px;font-size:16.0px;font-weight:400;color:#111;transform:scaleX(0.9126);">11869</span>
</body></html>
